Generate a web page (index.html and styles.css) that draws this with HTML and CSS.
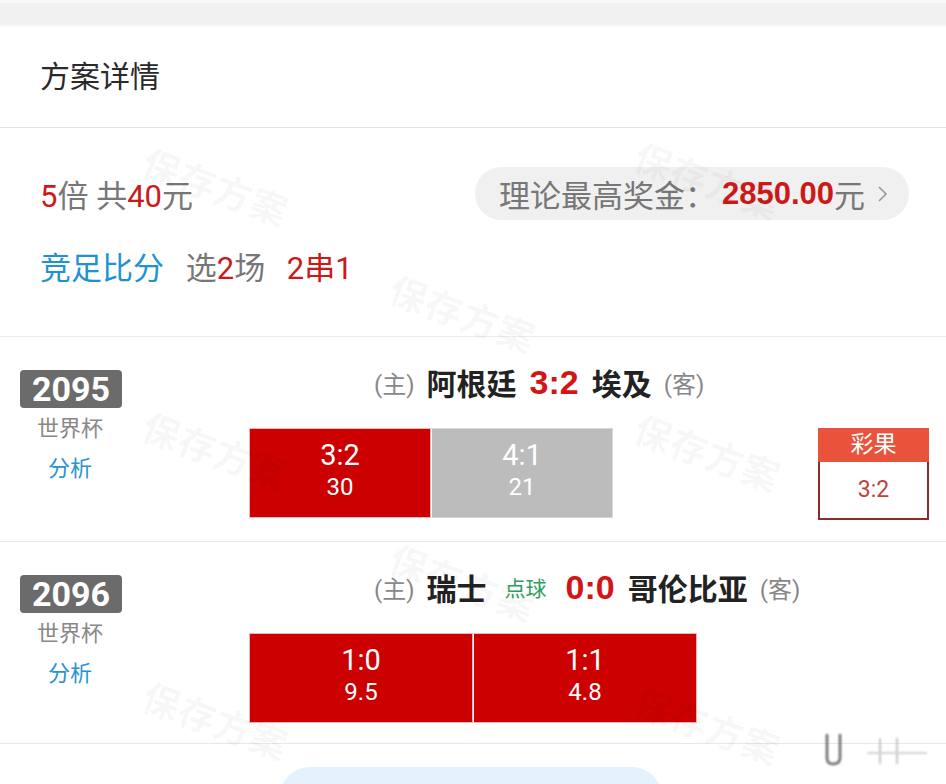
FILE: index.html
```html
<!DOCTYPE html>
<html lang="zh-CN">
<head>
  <meta charset="UTF-8" />
  <meta name="viewport" content="width=device-width, initial-scale=1.0"/>
  <title>方案详情</title>
  <link rel="stylesheet" href="styles.css">
</head>
<body>

<div class="top-bar"></div>

<main class="page">
  <div class="page-header">方案详情</div>

  <!-- 投注概要 -->
  <section class="summary">
    <div class="summary-row">
      <div class="bet-amount">
        <span class="red">5</span>倍 共<span class="red">40</span>元
      </div>
      <div class="prize-pill">
        理论最高奖金：<b class="prize-num">2850.00</b>元
        <svg class="chevron" width="12" height="20" viewBox="0 0 12 20">
          <path d="M2 3 L9 10 L2 17" fill="none" stroke="#999" stroke-width="1.6"/>
        </svg>
      </div>
    </div>
    <div class="play-type">
      <span class="blue">竞足比分</span>
      <span class="gap">选<span class="red">2</span>场</span>
      <span class="red gap">2串1</span>
    </div>
  </section>

  <!-- 场次 2095 -->
  <section class="match">
    <div class="match-info">
      <div class="match-no">2095</div>
      <div class="league">世界杯</div>
      <a class="analysis">分析</a>
    </div>
    <div class="match-body">
      <div class="match-title">
        <span class="side">(主)</span>
        <span class="team">阿根廷</span>
        <span class="score">3:2</span>
        <span class="team">埃及</span>
        <span class="side">(客)</span>
      </div>
      <div class="match-picks">
        <div class="pick hit narrow">
          <div class="pick-score">3:2</div>
          <div class="pick-odds">30</div>
        </div>
        <div class="pick miss narrow">
          <div class="pick-score">4:1</div>
          <div class="pick-odds">21</div>
        </div>
        <div class="result">
          <div class="result-head">彩果</div>
          <div class="result-value">3:2</div>
        </div>
      </div>
    </div>
  </section>

  <!-- 场次 2096 -->
  <section class="match last">
    <div class="match-info">
      <div class="match-no">2096</div>
      <div class="league">世界杯</div>
      <a class="analysis">分析</a>
    </div>
    <div class="match-body">
      <div class="match-title">
        <span class="side">(主)</span>
        <span class="team">瑞士</span>
        <span class="penalty">点球</span>
        <span class="score">0:0</span>
        <span class="team">哥伦比亚</span>
        <span class="side">(客)</span>
      </div>
      <div class="match-picks">
        <div class="pick hit wide">
          <div class="pick-score">1:0</div>
          <div class="pick-odds">9.5</div>
        </div>
        <div class="pick hit wide">
          <div class="pick-score">1:1</div>
          <div class="pick-odds">4.8</div>
        </div>
      </div>
    </div>
  </section>

  <div class="footer">
    <div class="save-btn"></div>
  </div>
</main>

<!-- 水印 -->
<div class="watermarks">
  <span class="wm" style="left:154px;top:134px">保存方案</span>
  <span class="wm" style="left:646px;top:128px">保存方案</span>
  <span class="wm" style="left:401px;top:261px">保存方案</span>
  <span class="wm" style="left:154px;top:398px">保存方案</span>
  <span class="wm" style="left:646px;top:400px">保存方案</span>
  <span class="wm" style="left:401px;top:530px">保存方案</span>
  <span class="wm" style="left:154px;top:668px">保存方案</span>
  <span class="wm" style="left:646px;top:673px">保存方案</span>
  <svg class="corner-mark" width="115" height="44" viewBox="0 0 115 44">
    <path d="M12 10 V34 Q12 40 18 40 Q25 40 25 34 V10" fill="none" stroke="#666" stroke-width="2.5"/>
    <path d="M65 14 V40 M82 14 V40" stroke="#c4c4c4" stroke-width="2"/>
    <path d="M52 29 H112" stroke="#d2d2d2" stroke-width="2"/>
  </svg>
</div>

</body>
</html>
```

FILE: styles.css
```css
body {
  margin: 0;
  background: #fff;
  font-family: "Roboto", "Noto Sans CJK SC", sans-serif;
  color: #333;
  position: relative;
  overflow: hidden;
  height: 784px;
}

.top-bar {
  height: 22px;
  background: #f1f1f1;
  border-top: 3px solid #f8f8f8;
  border-bottom: 2px solid #fafafa;
}

.red { color: #cc1a1a; }
.blue { color: #1f93d0; }
.gap { margin-left: 14px; }

.page-header {
  height: 101px;
  box-sizing: border-box;
  padding: 0 0 6px 40px;
  display: flex;
  align-items: center;
  font-size: 30px;
  color: #2a2a2a;
  border-bottom: 1px solid #e4e4e4;
}

/* 概要 */
.summary {
  padding: 39px 37px 47px 40px;
  border-bottom: 1px solid #ececec;
}

.summary-row {
  display: flex;
  justify-content: space-between;
  align-items: center;
}

.bet-amount {
  font-size: 31px;
  color: #777;
}

.prize-pill {
  height: 53px;
  display: flex;
  align-items: center;
  padding: 0 20px 0 24px;
  background: #f0f0f0;
  border-radius: 27px;
  font-size: 31px;
  color: #777;
}

.prize-num {
  font-family: "Liberation Sans", "Roboto", sans-serif;
  color: #cc1a1a;
  font-weight: 700;
  font-size: 31px;
  margin-left: 6px;
}

.chevron {
  margin-left: 12px;
}

.play-type {
  margin-top: 29px;
  line-height: 40px;
  font-size: 31px;
  color: #777;
}

/* 场次 */
.match {
  display: flex;
  height: 205px;
  border-bottom: 1px solid #e8e8e8;
  box-sizing: border-box;
  padding-top: 33px;
}

.match.last { height: 202px; }

.match-info {
  width: 140px;
  display: flex;
  flex-direction: column;
  align-items: center;
}

.match-no {
  width: 102px;
  height: 38px;
  margin-left: 2px;
  background: #6b6b6b;
  border-radius: 4px;
  color: #fff;
  font-weight: 700;
  font-size: 34px;
  line-height: 38px;
  text-align: center;
}

.league {
  margin-top: 6px;
  font-size: 22px;
  line-height: 30px;
  color: #888;
}

.analysis {
  margin-top: 10px;
  font-size: 22px;
  line-height: 30px;
  color: #2a94cf;
}

.match-body {
  flex: 1;
  padding-left: 109px;
  padding-right: 17px;
}

.match-title {
  display: flex;
  align-items: center;
  height: 36px;
  margin-top: -6px;
  padding-left: 125px;
  gap: 12px;
}

.side {
  font-size: 24px;
  color: #888;
}

.team {
  font-size: 30px;
  font-weight: 700;
  color: #222;
}

.score {
  font-family: "Liberation Sans", "Roboto", sans-serif;
  font-size: 34px;
  font-weight: 700;
  color: #d41515;
  margin: 0 1px;
}

.penalty {
  font-size: 21px;
  color: #2ea061;
  margin: 0 6px;
}

.match-picks {
  display: flex;
  margin-top: 28px;
}

.pick {
  height: 90px;
  box-sizing: border-box;
  padding-top: 9px;
  text-align: center;
  color: #fff;
}

.pick.narrow { width: 182px; }
.pick.wide { width: 224px; }

.pick.hit {
  background: #cc0000;
  border: 1px solid #f1b5b5;
}

.pick.miss {
  background: #bcbcbc;
  border: 1px solid #d8d8d8;
}

.pick + .pick { border-left-color: #fff; }

.pick-score {
  font-size: 29px;
  line-height: 34px;
}

.pick-odds {
  font-size: 24px;
  line-height: 30px;
}

.result {
  margin-left: auto;
  width: 111px;
  height: 90px;
  display: flex;
  flex-direction: column;
}

.result-head {
  height: 34px;
  background: #e9533b;
  color: #fff;
  font-size: 23px;
  line-height: 34px;
  text-align: center;
}

.result-value {
  flex: 1;
  border: 2px solid #8e2c2c;
  border-top: none;
  color: #c0433a;
  font-size: 23px;
  text-align: center;
  line-height: 56px;
}

/* 底部按钮 */
.footer {
  padding-top: 23px;
  display: flex;
  justify-content: center;
}

.save-btn {
  width: 382px;
  height: 60px;
  margin-left: -4px;
  background: #e3f2fc;
  border-radius: 30px;
}

/* 水印层 */
.watermarks {
  position: absolute;
  inset: 0;
  pointer-events: none;
}

.wm {
  position: absolute;
  font-size: 37px;
  font-weight: 700;
  color: rgba(0, 0, 0, 0.045);
  transform: rotate(20deg);
  transform-origin: left top;
  letter-spacing: 1px;
}

.corner-mark {
  position: absolute;
  left: 815px;
  top: 724px;
  filter: blur(0.8px);
}
```
